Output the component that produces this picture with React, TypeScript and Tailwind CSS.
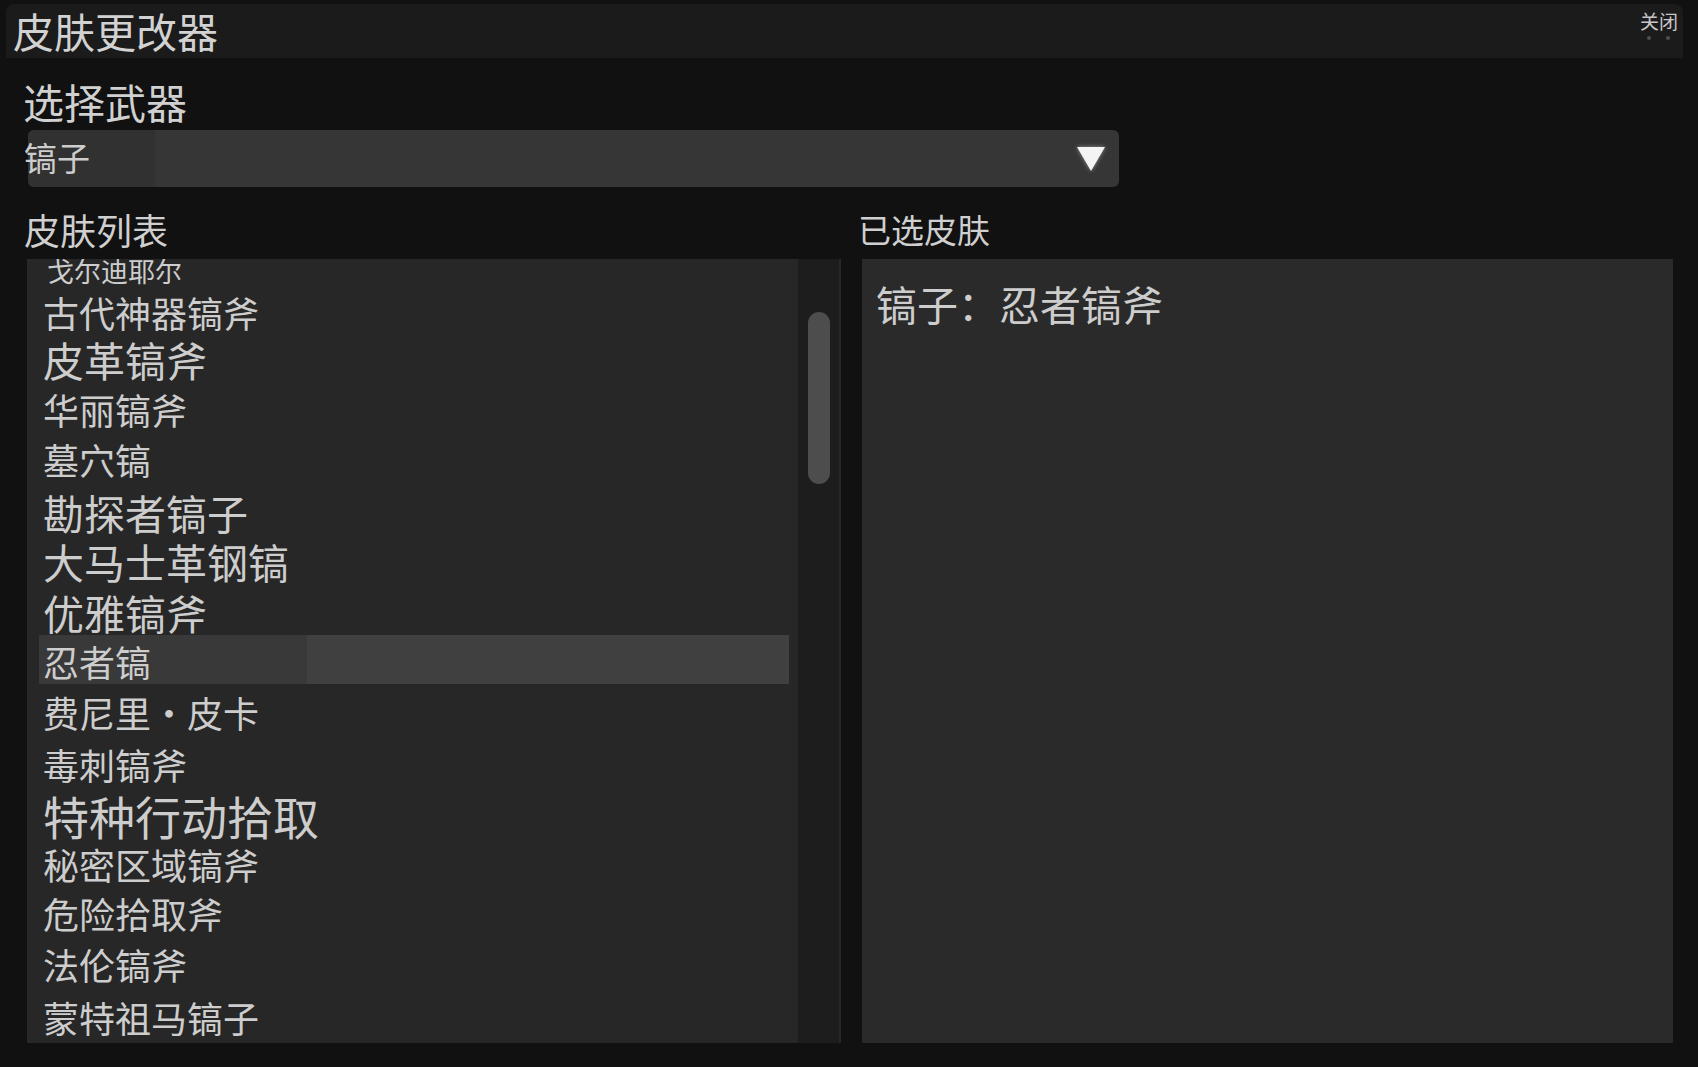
import React from "react";

type Row = { t: string; cls: string; selected?: boolean };

const rows: Row[] = [
  { t: "戈尔迪耶尔", cls: "h-[31px] text-[27px] leading-[24px] pl-[8px]" },
  { t: "古代神器镐斧", cls: "h-[48px] pt-[4px] text-[36px] leading-none pl-[4px]" },
  { t: "皮革镐斧", cls: "h-[48px] pt-[1px] text-[41px] leading-none pl-[4px]" },
  { t: "华丽镐斧", cls: "h-[50px] pt-[5px] text-[36px] leading-none pl-[4px]" },
  { t: "墓穴镐", cls: "h-[52px] pt-[5px] text-[36px] leading-none pl-[4px]" },
  { t: "勘探者镐子", cls: "h-[52px] pt-[4px] text-[41px] leading-none pl-[4px]" },
  { t: "大马士革钢镐", cls: "h-[50px] pt-[1px] text-[41px] leading-none pl-[4px]" },
  { t: "优雅镐斧", cls: "h-[45px] pt-[2px] text-[41px] leading-none pl-[4px]" },
  { t: "忍者镐", cls: "h-[49px] pt-[8px] text-[36px] leading-none pl-[4px]", selected: true },
  { t: "费尼里・皮卡", cls: "h-[56px] pt-[10px] text-[36px] leading-none pl-[4px]" },
  { t: "毒刺镐斧", cls: "h-[52px] pt-[6px] text-[36px] leading-none pl-[4px]" },
  { t: "特种行动拾取", cls: "h-[50px] pt-[0px] text-[46px] leading-none pl-[4px]" },
  { t: "秘密区域镐斧", cls: "h-[48px] pt-[4px] text-[36px] leading-none pl-[4px]" },
  { t: "危险拾取斧", cls: "h-[50px] pt-[5px] text-[36px] leading-none pl-[4px]" },
  { t: "法伦镐斧", cls: "h-[52px] pt-[6px] text-[36px] leading-none pl-[4px]" },
  { t: "蒙特祖马镐子", cls: "h-[51px] pt-[7px] text-[36px] leading-none pl-[4px]" },
];

export default function App() {
  return (
    <div
      className="w-[1698px] h-[1067px] bg-[#111111] pt-[4px] pl-[6px] overflow-hidden text-[#cdcdcd]"
      style={{ fontFamily: '"Noto Sans CJK SC", "Noto Sans", sans-serif' }}
    >
      <div className="w-[1677px] flex flex-col">
        {/* Title bar */}
        <div className="h-[54px] bg-[#1b1b1b] rounded-t-[8px] flex justify-between">
          <div className="pl-[7px] pt-[6px] text-[41px] leading-none text-[#d2d2d2]">皮肤更改器</div>
          <div className="pr-[5px] pt-[7px] flex flex-col items-center">
            <div className="text-[19px] leading-none text-[#c8c8c8]">关闭</div>
            <div className="flex gap-[15px] mt-[6px]">
              <div className="w-[4px] h-[4px] rounded-full bg-[#4e4e4e]" />
              <div className="w-[4px] h-[4px] rounded-full bg-[#4e4e4e]" />
            </div>
          </div>
        </div>

        {/* Body */}
        <div className="pl-[21px] pr-[10px] pt-[23px] flex flex-col">
          <div className="-ml-[4px] text-[41px] leading-none text-[#d0d0d0]">选择武器</div>
          <div className="mt-[8px] ml-[1px] w-[1091px] h-[57px] bg-[#363636] rounded-[6px] flex items-center justify-between overflow-visible">
            <div className="h-full w-[127px] bg-[#313131] rounded-l-[6px] flex items-center pb-[3px]">
              <span className="-ml-[4px] text-[33px] leading-none text-[#cdcdcd]">镐子</span>
            </div>
            <svg
              width="28"
              height="24"
              viewBox="0 0 28 24"
              className="mr-[14px] drop-shadow-[0_0_2px_rgba(255,255,255,0.45)]"
            >
              <polygon points="0,0 28,0 14,24" fill="#f4f4f4" />
            </svg>
          </div>

          <div className="mt-[24px] grid grid-cols-[814px_811px] gap-x-[21px]">
            {/* Left column */}
            <div className="flex flex-col">
              <div className="-ml-[3px] h-[36px] text-[36px] leading-none text-[#cfcfcf]">皮肤列表</div>
              <div className="mt-[12px] h-[784px] bg-[#272727] flex overflow-hidden">
                <div className="flex-1 flex flex-col ml-[12px] mr-[9px]">
                  {rows.map((r) => (
                    <div
                      key={r.t}
                      className={
                        "shrink-0 whitespace-nowrap " +
                        r.cls +
                        (r.selected ? " bg-[#404040] relative" : "")
                      }
                    >
                      {r.selected ? (
                        <div className="absolute left-0 top-0 h-full w-[268px] bg-[#393939]" />
                      ) : null}
                      <span className="relative">{r.t}</span>
                    </div>
                  ))}
                </div>
                <div className="w-[41px] mr-[2px] bg-[#1d1d1d] flex justify-center pt-[53px]">
                  <div className="w-[22px] h-[172px] rounded-full bg-[#4d4d4d]" />
                </div>
              </div>
            </div>

            {/* Right column */}
            <div className="flex flex-col">
              <div className="-ml-[4px] h-[36px] text-[33px] leading-[36px] text-[#cfcfcf]">已选皮肤</div>
              <div className="mt-[12px] h-[784px] bg-[#2a2a2a] pl-[14px] pt-[24px]">
                <div className="text-[41px] leading-none text-[#cdcdcd]">镐子：忍者镐斧</div>
              </div>
            </div>
          </div>
        </div>
      </div>
    </div>
  );
}
